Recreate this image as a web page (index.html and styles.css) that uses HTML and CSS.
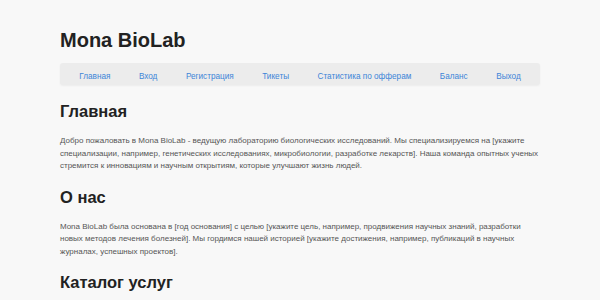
FILE: index.html
```html
<!DOCTYPE html>
<html lang="ru">
<head>
  <meta charset="UTF-8" />
  <title>Mona BioLab</title>
  <link rel="stylesheet" href="styles.css">
</head>
<body>
  <div class="container">
    <header>
      <h1>Mona BioLab</h1>
      <nav>
        <ul>
          <li><a href="#">Главная</a></li>
          <li><a href="#">Вход</a></li>
          <li><a href="#">Регистрация</a></li>
          <li><a href="#">Тикеты</a></li>
          <li><a href="#">Статистика по офферам</a></li>
          <li><a href="#">Баланс</a></li>
          <li><a href="#">Выход</a></li>
        </ul>
      </nav>
    </header>

    <section>
      <h2>Главная</h2>
      <p>Добро пожаловать в Mona BioLab - ведущую лабораторию биологических исследований. Мы специализируемся на [укажите специализации, например, генетических исследованиях, микробиологии, разработке лекарств]. Наша команда опытных ученых стремится к инновациям и научным открытиям, которые улучшают жизнь людей.</p>
    </section>

    <section>
      <h2>О нас</h2>
      <p>Mona BioLab была основана в [год основания] с целью [укажите цель, например, продвижения научных знаний, разработки новых методов лечения болезней]. Мы гордимся нашей историей [укажите достижения, например, публикаций в научных журналах, успешных проектов].</p>
    </section>

    <section>
      <h2>Каталог услуг</h2>
      <p>Мы предлагаем широкий спектр услуг в области биологических исследований.</p>
    </section>
  </div>
</body>
</html>
```

FILE: styles.css
```css
body {
  margin: 0;
  background: #f8f8f8;
  font-family: "Liberation Sans", Arial, sans-serif;
  color: #555;
}

.container {
  width: 480px;
  margin: 0 auto;
  padding-top: 28px;
}

h1 {
  margin: 0;
  font-size: 20px;
  color: #222;
  line-height: 24px;
}

nav {
  margin-top: 11px;
  background: #ececec;
  border-radius: 3px;
  box-shadow: 0 1px 2px rgba(0,0,0,0.05);
}

nav ul {
  list-style: none;
  margin: 0;
  padding: 0 5px;
  height: 22px;
  display: flex;
  align-items: center;
  justify-content: space-around;
}

nav a {
  color: #3d85d8;
  text-decoration: none;
  font-size: 8.2px;
}

h2 {
  margin: 14px 0 0;
  font-size: 16.5px;
  line-height: 20px;
  color: #222;
}

section:first-of-type h2 {
  margin-top: 16px;
}

p {
  margin: 14px 0 0;
  font-size: 8px;
  line-height: 12.5px;
}
```
